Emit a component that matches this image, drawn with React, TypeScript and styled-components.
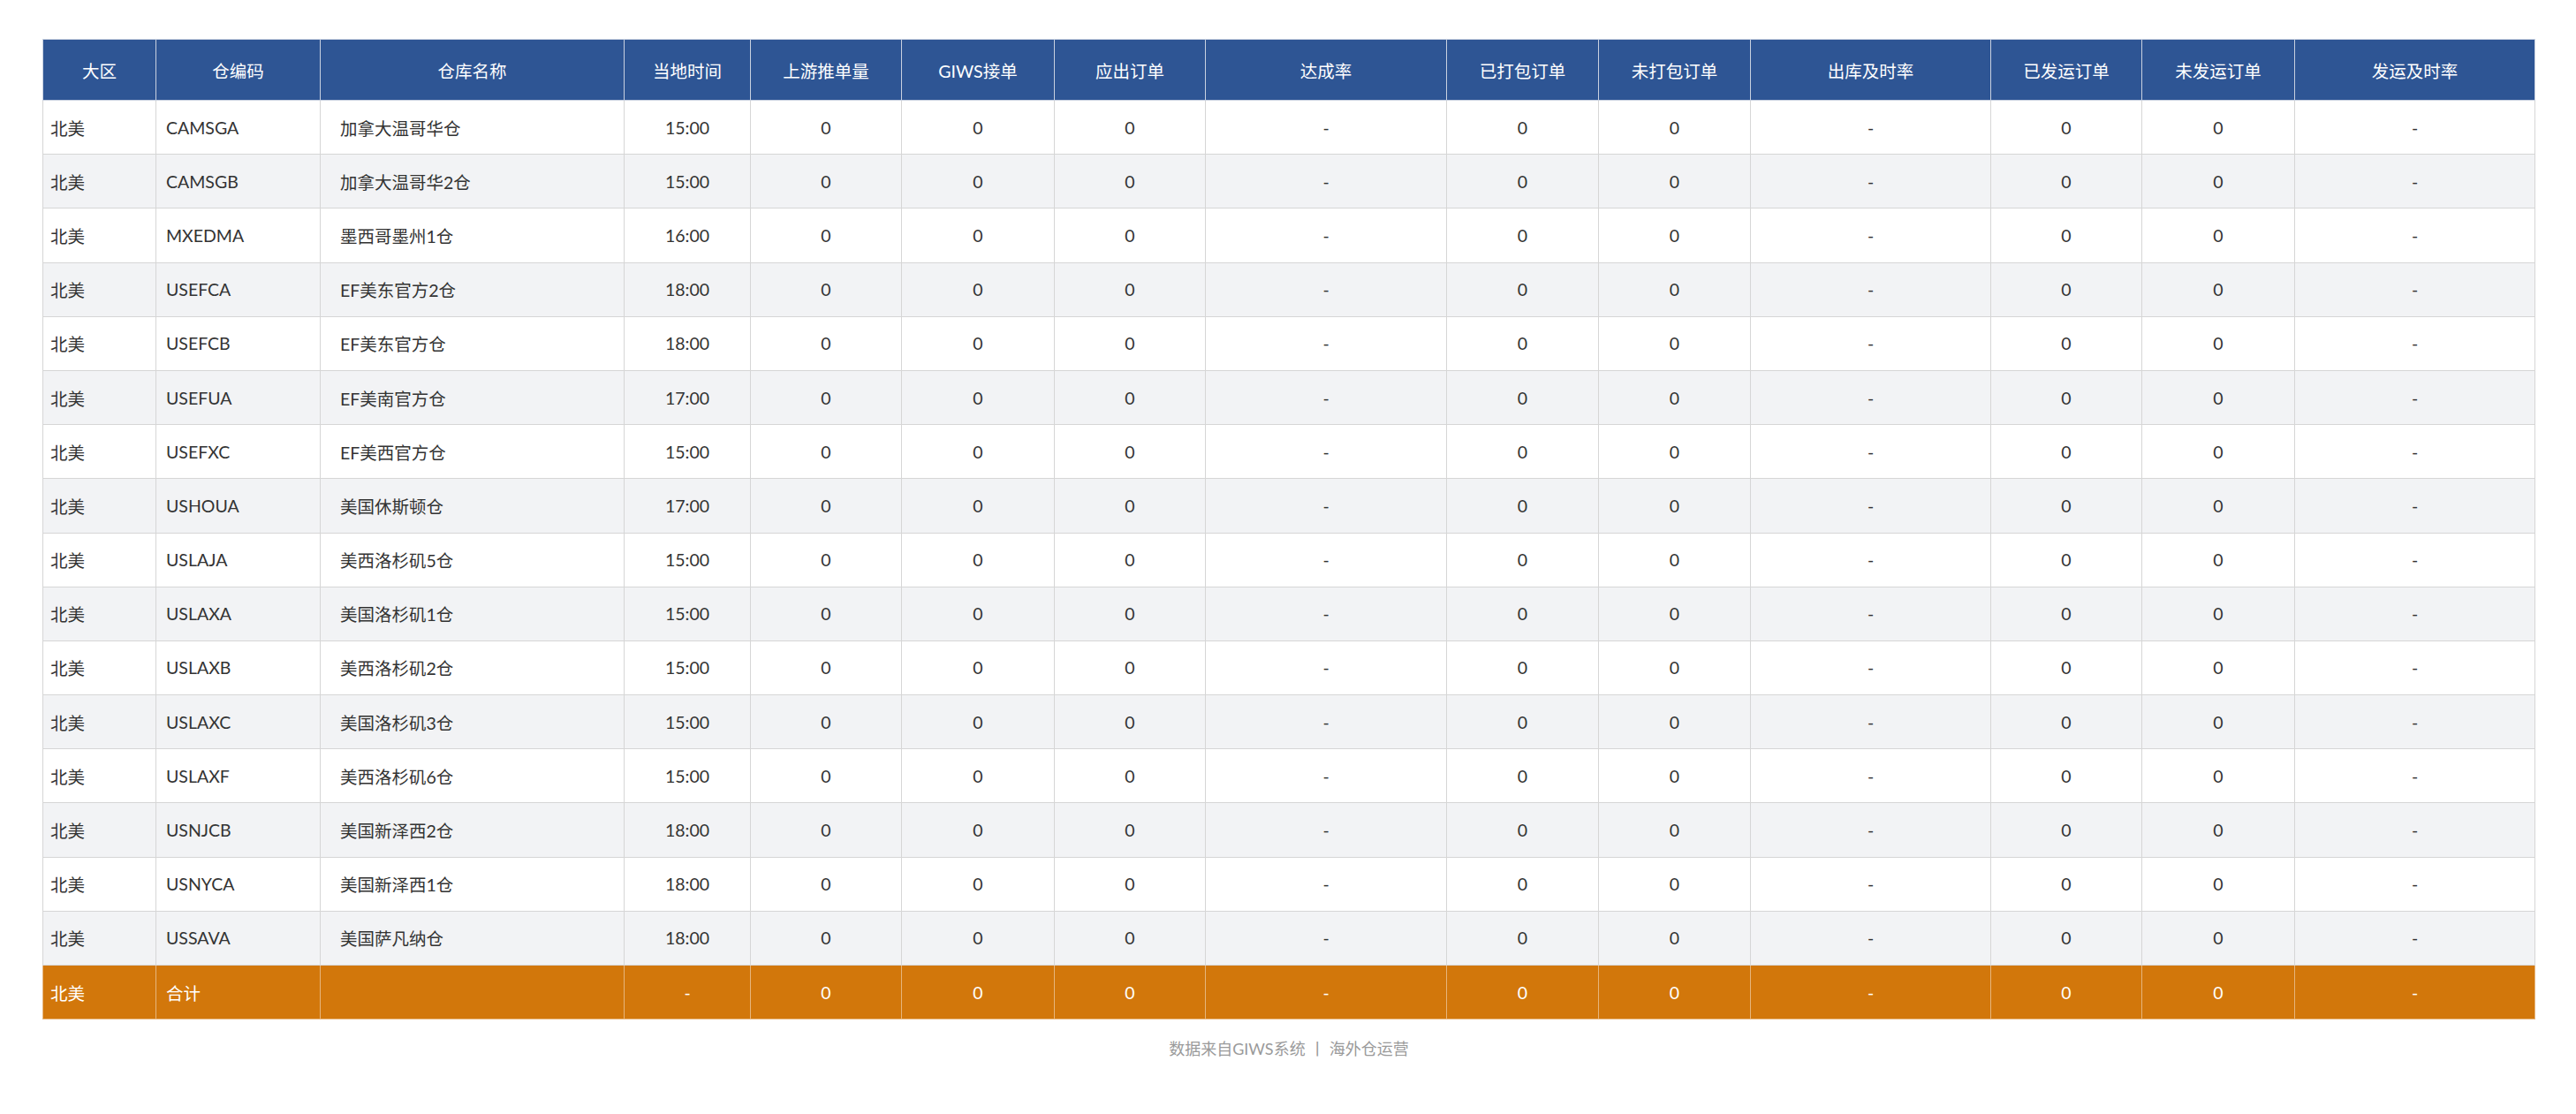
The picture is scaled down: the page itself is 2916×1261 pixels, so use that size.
import React from 'react';
import styled, { createGlobalStyle } from 'styled-components';

const GlobalStyle = createGlobalStyle`
  html, body {
    margin: 0;
    padding: 0;
    background: #ffffff;
  }
  body {
    font-family: Lato, "Noto Sans CJK SC", sans-serif;
    color: #333333;
  }
`;

const Page = styled.div`
  padding: 44px 46px 0 48px;
  display: flex;
  flex-direction: column;
  align-items: stretch;
`;

const Table = styled.table`
  width: 100%;
  table-layout: fixed;
  border-collapse: collapse;
  border: 1px solid #d0d0d0;
  font-size: 19.5px;
`;

const HeadCell = styled.th`
  height: 68px;
  background: #2e5594;
  color: #ffffff;
  font-weight: 400;
  text-align: center;
  border: 1px solid #c9d1e0;
  padding: 0;
`;

const Row = styled.tr<{ $alt?: boolean; $total?: boolean }>`
  height: 61.2px;
  background: ${(p) => (p.$total ? '#d2770b' : p.$alt ? '#f2f3f5' : '#ffffff')};
  color: ${(p) => (p.$total ? '#ffffff' : '#333333')};
`;

const Cell = styled.td<{ $align?: 'left' | 'center'; $indent?: number; $total?: boolean }>`
  text-align: ${(p) => p.$align ?? 'center'};
  padding: 0 0 0 ${(p) => p.$indent ?? 0}px;
  border: 1px solid ${(p) => (p.$total ? '#e6b57c' : '#d6d6d6')};
  white-space: nowrap;
  overflow: hidden;
`;

const Footer = styled.div`
  margin-top: 19px;
  text-align: center;
  font-size: 18px;
  color: #9a9a9a;
`;

const widths = [128, 186, 344, 143, 171, 173, 171, 273, 172, 172, 272, 171, 173, 272];

const headers = [
  '大区', '仓编码', '仓库名称', '当地时间', '上游推单量', 'GIWS接单', '应出订单',
  '达成率', '已打包订单', '未打包订单', '出库及时率', '已发运订单', '未发运订单', '发运及时率',
];

const stats = ['0', '0', '0', '-', '0', '0', '-', '0', '0', '-'];

const warehouses: [string, string, string][] = [
  ['CAMSGA', '加拿大温哥华仓', '15:00'],
  ['CAMSGB', '加拿大温哥华2仓', '15:00'],
  ['MXEDMA', '墨西哥墨州1仓', '16:00'],
  ['USEFCA', 'EF美东官方2仓', '18:00'],
  ['USEFCB', 'EF美东官方仓', '18:00'],
  ['USEFUA', 'EF美南官方仓', '17:00'],
  ['USEFXC', 'EF美西官方仓', '15:00'],
  ['USHOUA', '美国休斯顿仓', '17:00'],
  ['USLAJA', '美西洛杉矶5仓', '15:00'],
  ['USLAXA', '美国洛杉矶1仓', '15:00'],
  ['USLAXB', '美西洛杉矶2仓', '15:00'],
  ['USLAXC', '美国洛杉矶3仓', '15:00'],
  ['USLAXF', '美西洛杉矶6仓', '15:00'],
  ['USNJCB', '美国新泽西2仓', '18:00'],
  ['USNYCA', '美国新泽西1仓', '18:00'],
  ['USSAVA', '美国萨凡纳仓', '18:00'],
];

export default function App() {
  return (
    <Page>
      <GlobalStyle />
      <Table>
        <colgroup>
          {widths.map((w, i) => (
            <col key={i} style={{ width: w }} />
          ))}
        </colgroup>
        <thead>
          <tr>
            {headers.map((h) => (
              <HeadCell key={h}>{h}</HeadCell>
            ))}
          </tr>
        </thead>
        <tbody>
          {warehouses.map(([code, name, time], i) => (
            <Row key={code} $alt={i % 2 === 1}>
              <Cell $align="left" $indent={8}>北美</Cell>
              <Cell $align="left" $indent={11}>{code}</Cell>
              <Cell $align="left" $indent={22}>{name}</Cell>
              <Cell>{time}</Cell>
              {stats.map((s, j) => (
                <Cell key={j}>{s}</Cell>
              ))}
            </Row>
          ))}
          <Row $total>
            <Cell $total $align="left" $indent={8}>北美</Cell>
            <Cell $total $align="left" $indent={11}>合计</Cell>
            <Cell $total />
            <Cell $total>-</Cell>
            {stats.map((s, j) => (
              <Cell $total key={j}>{s}</Cell>
            ))}
          </Row>
        </tbody>
      </Table>
      <Footer>数据来自GIWS系统 丨 海外仓运营</Footer>
    </Page>
  );
}
